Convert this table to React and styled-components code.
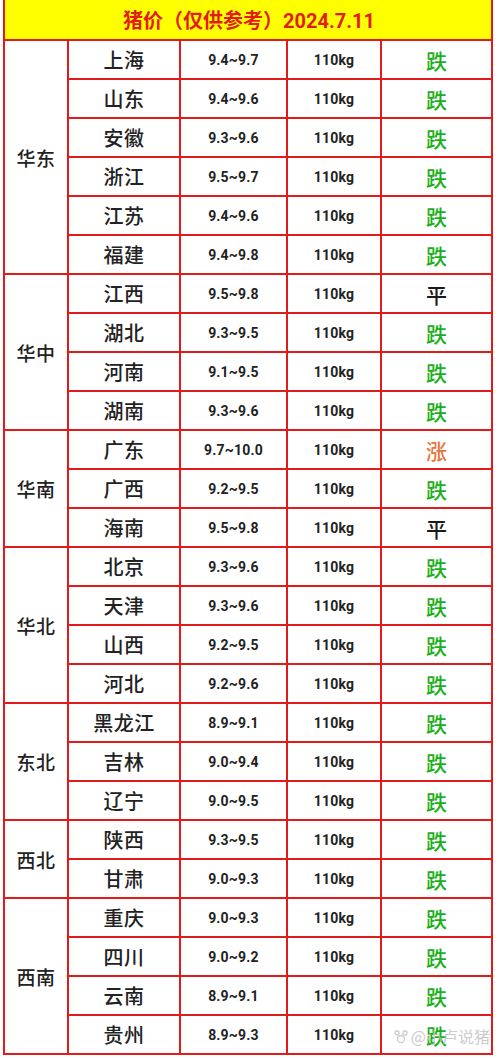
import React from 'react';
import styled, { createGlobalStyle } from 'styled-components';

const GlobalStyle = createGlobalStyle`
  html, body {
    margin: 0;
    padding: 0;
    background: #ffffff;
  }
  body {
    font-family: "Noto Sans CJK SC", Roboto, sans-serif;
  }
`;

const LINE = '#e11a1a';

const Page = styled.div`
  width: 500px;
  height: 1058px;
  position: relative;
  background: #fff;
`;

const Table = styled.div`
  margin-left: 3px;
  width: 490px;
  box-sizing: border-box;
  display: grid;
  grid-template-columns: 62px 110px 105px 92px 109px;
  grid-template-rows: 39px;
  grid-auto-rows: 37px;
  gap: 2px;
  padding: 0 2px 2px 2px;
  background: ${LINE};
`;

const Title = styled.div`
  grid-column: 1 / -1;
  background: #ffff00;
  color: #e41b17;
  font-family: Roboto, "Noto Sans CJK SC", sans-serif;
  font-weight: 700;
  font-size: 20px;
  display: flex;
  align-items: center;
  justify-content: center;
  padding-left: 2px;
`;

const Cell = styled.div`
  background: #fff;
  display: flex;
  align-items: center;
  justify-content: center;
  color: #222;
`;

const Region = styled(Cell)`
  grid-row: span ${p => p.$span};
  font-size: 19px;
  font-weight: 500;
  letter-spacing: 0.5px;
`;

const Province = styled(Cell)`
  font-size: 20px;
  font-weight: 500;
  letter-spacing: 0.5px;
`;

const Num = styled(Cell)`
  font-family: Roboto, "Liberation Sans", sans-serif;
  font-weight: 700;
  font-size: 14px;
  letter-spacing: 0.2px;
  color: #222;
`;

const TREND_COLORS = { 跌: '#1bb01b', 平: '#1a1a1a', 涨: '#e8743c' };

const Trend = styled(Cell)`
  font-size: 21px;
  font-weight: 500;
  color: ${p => TREND_COLORS[p.$t]};
`;

const Watermark = styled.div`
  position: absolute;
  right: 10px;
  bottom: 10px;
  display: flex;
  align-items: center;
  gap: 2px;
  color: #c4c4c4;
  font-size: 16px;
  opacity: 0.85;
  pointer-events: none;
`;

const data = [
  ['华东', [
    ['上海', '9.4~9.7', '跌'],
    ['山东', '9.4~9.6', '跌'],
    ['安徽', '9.3~9.6', '跌'],
    ['浙江', '9.5~9.7', '跌'],
    ['江苏', '9.4~9.6', '跌'],
    ['福建', '9.4~9.8', '跌'],
  ]],
  ['华中', [
    ['江西', '9.5~9.8', '平'],
    ['湖北', '9.3~9.5', '跌'],
    ['河南', '9.1~9.5', '跌'],
    ['湖南', '9.3~9.6', '跌'],
  ]],
  ['华南', [
    ['广东', '9.7~10.0', '涨'],
    ['广西', '9.2~9.5', '跌'],
    ['海南', '9.5~9.8', '平'],
  ]],
  ['华北', [
    ['北京', '9.3~9.6', '跌'],
    ['天津', '9.3~9.6', '跌'],
    ['山西', '9.2~9.5', '跌'],
    ['河北', '9.2~9.6', '跌'],
  ]],
  ['东北', [
    ['黑龙江', '8.9~9.1', '跌'],
    ['吉林', '9.0~9.4', '跌'],
    ['辽宁', '9.0~9.5', '跌'],
  ]],
  ['西北', [
    ['陕西', '9.3~9.5', '跌'],
    ['甘肃', '9.0~9.3', '跌'],
  ]],
  ['西南', [
    ['重庆', '9.0~9.3', '跌'],
    ['四川', '9.0~9.2', '跌'],
    ['云南', '8.9~9.1', '跌'],
    ['贵州', '8.9~9.3', '跌'],
  ]],
];

const Paw = () => (
  <svg width="16" height="16" viewBox="0 0 16 16" fill="none" stroke="#c4c4c4" strokeWidth="1.3">
    <circle cx="4" cy="5" r="2" />
    <circle cx="12" cy="5" r="2" />
    <circle cx="8" cy="11" r="3.5" />
  </svg>
);

export default function App() {
  return (
    <Page>
      <GlobalStyle />
      <Table>
        <Title>猪价（仅供参考）2024.7.11</Title>
        {data.map(([region, rows]) => (
          <React.Fragment key={region}>
            {rows.map((r, i) => (
              <React.Fragment key={r[0]}>
                {i === 0 && <Region $span={rows.length}>{region}</Region>}
                <Province>{r[0]}</Province>
                <Num>{r[1]}</Num>
                <Num>110kg</Num>
                <Trend $t={r[2]}>{r[2]}</Trend>
              </React.Fragment>
            ))}
          </React.Fragment>
        ))}
      </Table>
      <Watermark>
        <Paw />
        <span>@小卢说猪</span>
      </Watermark>
    </Page>
  );
}
